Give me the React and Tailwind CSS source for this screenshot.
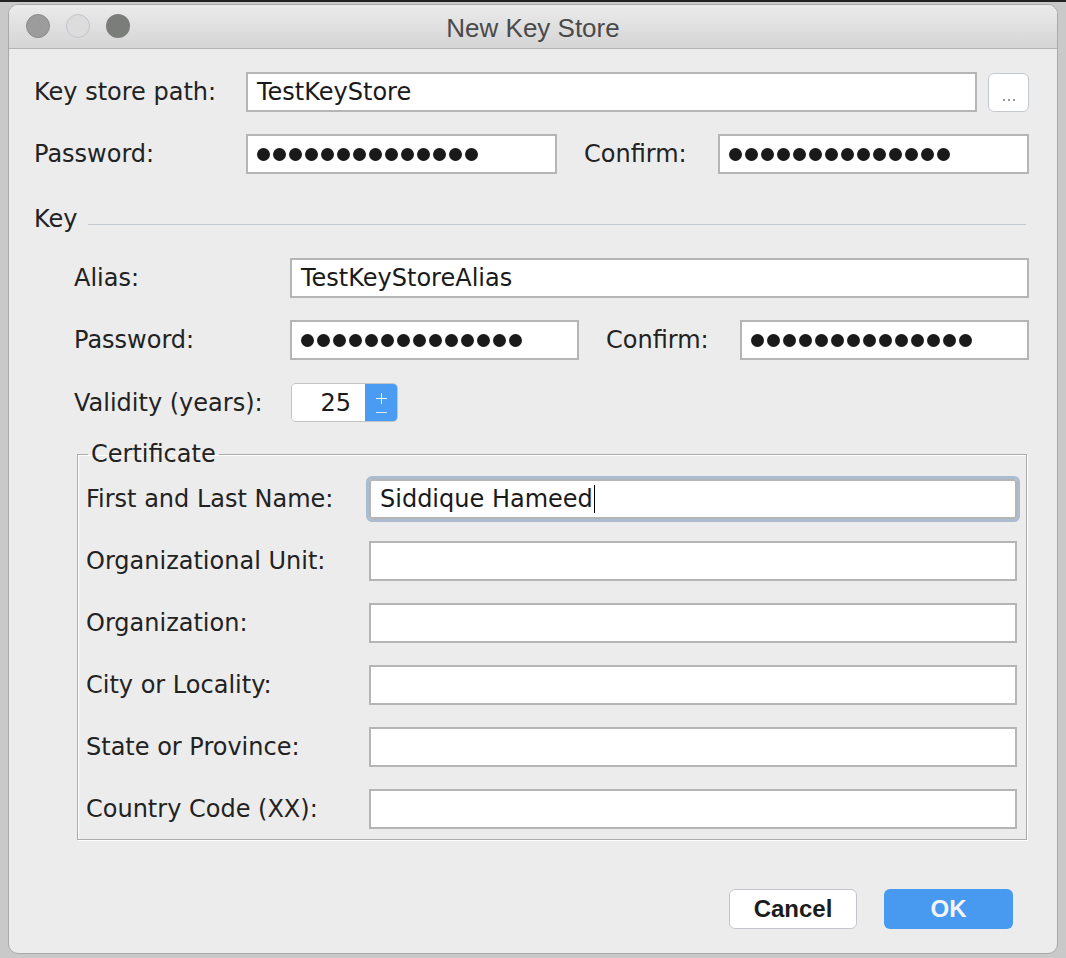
import React from "react";

const LABEL = "font-['DejaVu_Sans',sans-serif] text-[24px] text-[#222]";
const INPUT =
  "h-[40px] bg-white border-2 border-[#b5b5b5] flex items-center px-[9px] font-['DejaVu_Sans',sans-serif] text-[24px] text-[#1a1a1a]";

const Dots = ({ count = 14 }) => (
  <div className="flex gap-[3px]">
    {Array.from({ length: count }).map((_, i) => (
      <span key={i} className="w-[13px] h-[13px] rounded-full bg-[#1a1a1a]" />
    ))}
  </div>
);

const CertRow = ({ label, children, focused, first }) => (
  <div className={`flex items-center h-[40px] ${first ? "" : "mt-[22px]"}`}>
    <div className={`${LABEL} w-[283px] shrink-0`}>{label}</div>
    <div
      className={`${INPUT} flex-1 ${
        focused ? "rounded-[3px] outline-[3px] outline-solid outline-[#abbbd2]" : ""
      }`}
    >
      {children}
    </div>
  </div>
);

export default function App() {
  const certFields = [
    "Organizational Unit:",
    "Organization:",
    "City or Locality:",
    "State or Province:",
    "Country Code (XX):",
  ];

  return (
    <div className="w-[1066px] h-[958px] bg-[#c9c9c9] border-t-2 border-[#222] pt-[2px] pl-[8px] overflow-hidden">
      <div className="w-[1050px] h-[950px] rounded-[10px] bg-[#ececec] border border-[#a9a9a9] flex flex-col overflow-hidden">
        {/* Title bar */}
        <div className="relative h-[44px] shrink-0 bg-gradient-to-b from-[#ebebeb] to-[#d5d5d5] border-b border-[#b3b3b3] flex items-center justify-center pt-[3px]">
          <div className="absolute left-[17px] top-[9px] flex gap-[16px]">
            <span className="w-[24px] h-[24px] rounded-full bg-[#9c9c9c] border border-[#8a8a8a]" />
            <span className="w-[24px] h-[24px] rounded-full bg-[#dcdcdc] border border-[#bfc4cc]" />
            <span className="w-[24px] h-[24px] rounded-full bg-[#7b7d7a]" />
          </div>
          <span className="font-['Liberation_Sans',sans-serif] text-[26px] text-[#4a4a4a]">
            New Key Store
          </span>
        </div>

        {/* Body */}
        <div className="flex-1 flex flex-col pl-[25px] pr-[28px] pt-[23px]">
          {/* Key store path */}
          <div className="flex items-center h-[40px]">
            <div className={`${LABEL} w-[212px] shrink-0`}>Key store path:</div>
            <div className={`${INPUT} flex-1`}>TestKeyStore</div>
            <button className="ml-[11px] w-[41px] h-[39px] rounded-[6px] bg-white border border-[#c4c8d0] flex items-end justify-center pb-[10px]">
              <span className="flex gap-[3px]">
                <span className="w-[2px] h-[2px] bg-[#9a9a9a]" />
                <span className="w-[2px] h-[2px] bg-[#9a9a9a]" />
                <span className="w-[2px] h-[2px] bg-[#9a9a9a]" />
              </span>
            </button>
          </div>

          {/* Password / Confirm */}
          <div className="flex items-center h-[40px] mt-[22px]">
            <div className={`${LABEL} w-[212px] shrink-0`}>Password:</div>
            <div className={`${INPUT} w-[311px]`}>
              <Dots />
            </div>
            <div className={`${LABEL} ml-[27px] w-[134px] shrink-0`}>Confirm:</div>
            <div className={`${INPUT} flex-1`}>
              <Dots />
            </div>
          </div>

          {/* Key section header */}
          <div className="flex items-center h-[30px] mt-[30px]">
            <span className={LABEL}>Key</span>
            <div className="flex-1 h-px bg-[#c5cbd3] ml-[10px] mt-[10px] mr-[3px]" />
          </div>

          <div className="flex flex-col pl-[40px]">
            <div className="flex items-center h-[40px] mt-[24px]">
              <div className={`${LABEL} w-[216px] shrink-0`}>Alias:</div>
              <div className={`${INPUT} flex-1`}>TestKeyStoreAlias</div>
            </div>

            <div className="flex items-center h-[40px] mt-[22px]">
              <div className={`${LABEL} w-[216px] shrink-0`}>Password:</div>
              <div className={`${INPUT} w-[289px]`}>
                <Dots />
              </div>
              <div className={`${LABEL} ml-[27px] w-[134px] shrink-0`}>Confirm:</div>
              <div className={`${INPUT} flex-1`}>
                <Dots />
              </div>
            </div>

            <div className="flex items-center h-[39px] mt-[23px]">
              <div className={`${LABEL} w-[217px] shrink-0`}>Validity (years):</div>
              <div className="flex h-[39px] rounded-[5px] overflow-hidden border border-[#c3c3c3]">
                <div className="w-[73px] bg-white flex items-center justify-end pr-[14px] font-['DejaVu_Sans',sans-serif] text-[24px] text-[#1a1a1a]">
                  25
                </div>
                <div className="w-[32px] bg-[#4a9cf2] flex flex-col items-center justify-center leading-none">
                  <span className="relative w-[11px] h-[11px]">
                    <span className="absolute left-[5px] top-0 w-px h-[11px] bg-[#eef5fe]" />
                    <span className="absolute left-0 top-[5px] w-[11px] h-px bg-[#eef5fe]" />
                  </span>
                  <span className="w-[11px] h-px bg-[#dbe9fb] mt-[8px]" />
                </div>
              </div>
            </div>

            {/* Certificate */}
            <fieldset className="mt-[18px] ml-[3px] mr-[2px] border border-[#ababab] shadow-[1px_1px_0_#fff,inset_1px_1px_0_#fff] pl-[8px] pr-[9px] pt-[11px] pb-[10px]">
              <legend className={`${LABEL} ml-[2px] px-[3px] leading-[28px]`}>Certificate</legend>
              <CertRow label="First and Last Name:" focused first>
                <span>Siddique Hameed</span>
                <span className="w-px h-[28px] bg-black ml-[1px]" />
              </CertRow>
              {certFields.map((f) => (
                <CertRow key={f} label={f} />
              ))}
            </fieldset>
          </div>

          {/* Buttons */}
          <div className="flex justify-end mt-[49px] pr-[16px] gap-[27px]">
            <button className="w-[128px] h-[40px] rounded-[6px] bg-white border border-[#c2c6cc] font-['Liberation_Sans',sans-serif] font-bold text-[24px] text-[#1c1c1c]">
              Cancel
            </button>
            <button className="w-[129px] h-[40px] rounded-[6px] bg-[#4899f0] font-['Liberation_Sans',sans-serif] font-bold text-[24px] text-[#f4f4f4]">
              OK
            </button>
          </div>
        </div>
      </div>
    </div>
  );
}
